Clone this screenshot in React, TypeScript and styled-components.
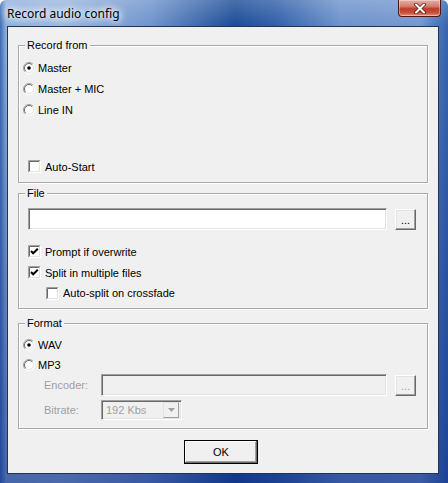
import React from 'react';
import styled, { createGlobalStyle } from 'styled-components';

const GlobalStyle = createGlobalStyle`
  html, body {
    margin: 0;
    padding: 0;
    background: #fff;
  }
  body {
    font-family: 'Liberation Sans', Arial, sans-serif;
    font-size: 11px;
    color: #000;
  }
`;

const Window = styled.div`
  width: 448px;
  height: 483px;
  display: flex;
  flex-direction: column;
  box-sizing: border-box;
  background:
    linear-gradient(to bottom, rgba(255, 255, 255, 0.2) 0px, rgba(255, 255, 255, 0) 26px, rgba(20, 50, 130, 0.15) 120px, rgba(10, 40, 130, 0.55) 483px),
    linear-gradient(
      to right,
      #3c6db6 0px,
      #8fb0dc 6px,
      #9ab7de 60px,
      #6f93cc 150px,
      #1b4b96 235px,
      #2f5ea8 275px,
      #6c92cc 340px,
      #7597ce 420px,
      #3563ad 448px
    );
  border-radius: 6px 6px 0 0;
  overflow: hidden;
`;

const TitleBar = styled.div`
  height: 26px;
  display: flex;
  align-items: flex-start;
  justify-content: space-between;
  padding-left: 7px;
  padding-right: 7px;
  flex-shrink: 0;
`;

const Title = styled.span`
  margin-top: 5px;
  font-family: 'Noto Sans', 'Open Sans', sans-serif;
  font-size: 12px;
  color: #000;
  text-shadow: 0 0 6px #fff, 0 0 8px #fff, 0 0 10px rgba(255, 255, 255, 0.9);
`;

const CloseButton = styled.div`
  width: 43px;
  height: 17px;
  box-sizing: border-box;
  border: 1px solid #4b1a16;
  border-top: none;
  border-radius: 0 0 4px 4px;
  background: linear-gradient(to bottom, #e6b1a6 0%, #d47b6c 40%, #bf3a28 55%, #c9513c 80%, #e59a7f 100%);
  box-shadow: inset 0 0 0 1px rgba(255, 255, 255, 0.35);
  display: flex;
  align-items: center;
  justify-content: center;
`;

const Client = styled.div`
  flex: 1;
  margin: 0 9px 9px 7px;
  border: 1px solid #1f3557;
  background: #f0f0f0;
  display: flex;
  flex-direction: column;
  padding: 18px 10px 0 10px;
`;

const Group = styled.div<{ $height: number; $gap?: number }>`
  position: relative;
  height: ${(p) => p.$height}px;
  box-sizing: border-box;
  border: 1px solid #a9a9a9;
  box-shadow: 1px 1px 0 #fff, inset 1px 1px 0 #fff;
  margin-bottom: ${(p) => p.$gap ?? 0}px;
  display: flex;
  flex-direction: column;
`;

const Legend = styled.span`
  position: absolute;
  top: -7px;
  left: 6px;
  padding: 0 2px;
  background: #f0f0f0;
  line-height: 13px;
`;

const GroupBody = styled.div<{ $pt: number; $pb: number }>`
  flex: 1;
  display: flex;
  flex-direction: column;
  padding: ${(p) => p.$pt}px 11px ${(p) => p.$pb}px 4px;
`;

const OptionRow = styled.label<{ $indent?: number; $h?: number; $push?: boolean; $gap?: number }>`
  display: flex;
  align-items: center;
  height: ${(p) => p.$h ?? 21}px;
  padding-left: ${(p) => p.$indent ?? 0}px;
  margin-top: ${(p) => (p.$push ? 'auto' : '0')};
  gap: ${(p) => p.$gap ?? 3}px;
  white-space: nowrap;
`;

const FieldRow = styled.div<{ $mt?: number; $mb?: number; $pl?: number }>`
  display: flex;
  align-items: center;
  margin-top: ${(p) => p.$mt ?? 0}px;
  margin-bottom: ${(p) => p.$mb ?? 0}px;
  padding-left: ${(p) => p.$pl ?? 0}px;
`;

const FieldLabel = styled.span`
  width: 57px;
  padding-left: 21px;
  color: #a0a0a0;
  flex-shrink: 0;
`;

const Sunken = styled.div<{ $disabled?: boolean; $w?: number }>`
  box-sizing: border-box;
  height: 22px;
  ${(p) => (p.$w ? `width: ${p.$w}px;` : 'flex: 1;')}
  background: ${(p) => (p.$disabled ? '#f0f0f0' : '#fff')};
  border-top: 1px solid #a0a0a0;
  border-left: 1px solid #a0a0a0;
  border-right: 1px solid #fff;
  border-bottom: 1px solid #fff;
  box-shadow: inset 1px 1px 0 #696969, inset -1px -1px 0 #e3e3e3;
`;

const Combo = styled(Sunken)`
  height: 20px;
  display: flex;
  align-items: center;
  justify-content: space-between;
  padding: 0 2px 0 4px;
  color: #a0a0a0;
`;

const ComboArrow = styled.div`
  width: 16px;
  height: 16px;
  box-sizing: border-box;
  background: #f0f0f0;
  border-top: 1px solid #e3e3e3;
  border-left: 1px solid #e3e3e3;
  border-right: 1px solid #a0a0a0;
  border-bottom: 1px solid #a0a0a0;
  display: flex;
  align-items: center;
  justify-content: center;
`;

const Raised = styled.button<{ $disabled?: boolean }>`
  box-sizing: border-box;
  width: 21px;
  height: 21px;
  margin-left: 8px;
  padding: 0 0 4px 0;
  background: #f0f0f0;
  border-top: 1px solid #fff;
  border-left: 1px solid #fff;
  border-right: 1px solid #696969;
  border-bottom: 1px solid #696969;
  box-shadow: inset -1px -1px 0 #a0a0a0, inset 1px 1px 0 #e3e3e3;
  font-family: 'Liberation Sans', Arial, sans-serif;
  font-size: 11px;
  color: ${(p) => (p.$disabled ? '#a0a0a0' : '#000')};
  display: flex;
  align-items: flex-end;
  justify-content: center;
  line-height: 10px;
`;

const Footer = styled.div`
  display: flex;
  justify-content: center;
  margin-top: 11px;
  padding-right: 4px;
`;

const OkButton = styled.button`
  box-sizing: border-box;
  width: 74px;
  height: 24px;
  background: #f0f0f0;
  border: 1px solid #000;
  box-shadow: inset -1px -1px 0 #696969, inset 1px 1px 0 #fff, inset -2px -2px 0 #a0a0a0;
  font-family: 'Liberation Sans', Arial, sans-serif;
  font-size: 11px;
  color: #000;
`;

const Radio = ({ checked }: { checked?: boolean }) => (
  <svg width="12" height="12" viewBox="0 0 12 12" style={{ flexShrink: 0 }}>
    <path d="M2.1 9.9 A5.5 5.5 0 0 1 9.9 2.1" stroke="#a0a0a0" fill="none" />
    <path d="M9.9 2.1 A5.5 5.5 0 0 1 2.1 9.9" stroke="#ffffff" fill="none" />
    <circle cx="6" cy="6" r="4.5" fill="#fff" />
    <path d="M2.8 9.2 A4.5 4.5 0 0 1 9.2 2.8" stroke="#696969" fill="none" />
    <path d="M9.2 2.8 A4.5 4.5 0 0 1 2.8 9.2" stroke="#e3e3e3" fill="none" />
    {checked && <circle cx="6" cy="6" r="1.8" fill="#000" />}
  </svg>
);

const Check = ({ checked }: { checked?: boolean }) => (
  <svg width="13" height="13" viewBox="0 0 13 13" style={{ flexShrink: 0 }}>
    <rect x="0" y="0" width="13" height="13" fill="#fff" />
    <path d="M0.5 12.5 V0.5 H12.5" stroke="#a0a0a0" fill="none" />
    <path d="M1.5 11.5 V1.5 H11.5" stroke="#696969" fill="none" />
    <path d="M0.5 12.5 H12.5 V0.5" stroke="#fff" fill="none" />
    <path d="M1.5 11.5 H11.5 V1.5" stroke="#e3e3e3" fill="none" />
    {checked && <path d="M3 6 L5.2 8.3 L9.8 3.8" stroke="#000" strokeWidth="2" fill="none" />}
  </svg>
);

function App() {
  return (
    <>
      <GlobalStyle />
      <Window>
        <TitleBar>
          <Title>Record audio config</Title>
          <CloseButton>
            <svg width="14" height="11" viewBox="0 0 14 11">
              <path d="M3 1.5 L11 9.5 M11 1.5 L3 9.5" stroke="#5a1d16" strokeWidth="3.6" strokeLinecap="round" />
              <path d="M3 1.5 L11 9.5 M11 1.5 L3 9.5" stroke="#fff" strokeWidth="2" strokeLinecap="round" />
            </svg>
          </CloseButton>
        </TitleBar>
        <Client>
          <Group $height={138} $gap={10}>
            <Legend>Record from</Legend>
            <GroupBody $pt={11} $pb={5}>
              <OptionRow>
                <Radio checked />
                Master
              </OptionRow>
              <OptionRow>
                <Radio />
                Master + MIC
              </OptionRow>
              <OptionRow>
                <Radio />
                Line IN
              </OptionRow>
              <OptionRow $indent={5} $push $gap={4}>
                <Check />
                Auto-Start
              </OptionRow>
            </GroupBody>
          </Group>

          <Group $height={116} $gap={14}>
            <Legend>File</Legend>
            <GroupBody $pt={14} $pb={5}>
              <FieldRow $mb={11} $pl={5}>
                <Sunken />
                <Raised>...</Raised>
              </FieldRow>
              <OptionRow $indent={5} $gap={4}>
                <Check checked />
                Prompt if overwrite
              </OptionRow>
              <OptionRow $indent={5} $gap={4}>
                <Check checked />
                Split in multiple files
              </OptionRow>
              <OptionRow $indent={23} $h={20} $gap={4}>
                <Check />
                Auto-split on crossfade
              </OptionRow>
            </GroupBody>
          </Group>

          <Group $height={106}>
            <Legend>Format</Legend>
            <GroupBody $pt={11} $pb={7}>
              <OptionRow $h={20}>
                <Radio checked />
                WAV
              </OptionRow>
              <OptionRow $h={20}>
                <Radio />
                MP3
              </OptionRow>
              <FieldRow $mt={-1}>
                <FieldLabel>Encoder:</FieldLabel>
                <Sunken $disabled />
                <Raised $disabled>...</Raised>
              </FieldRow>
              <FieldRow $mt={4}>
                <FieldLabel>Bitrate:</FieldLabel>
                <Combo $disabled $w={81}>
                  192 Kbs
                  <ComboArrow>
                    <svg width="7" height="4" viewBox="0 0 7 4">
                      <path d="M0 0 H7 L3.5 4 Z" fill="#a0a0a0" />
                    </svg>
                  </ComboArrow>
                </Combo>
              </FieldRow>
            </GroupBody>
          </Group>

          <Footer>
            <OkButton>OK</OkButton>
          </Footer>
        </Client>
      </Window>
    </>
  );
}

export default App;
